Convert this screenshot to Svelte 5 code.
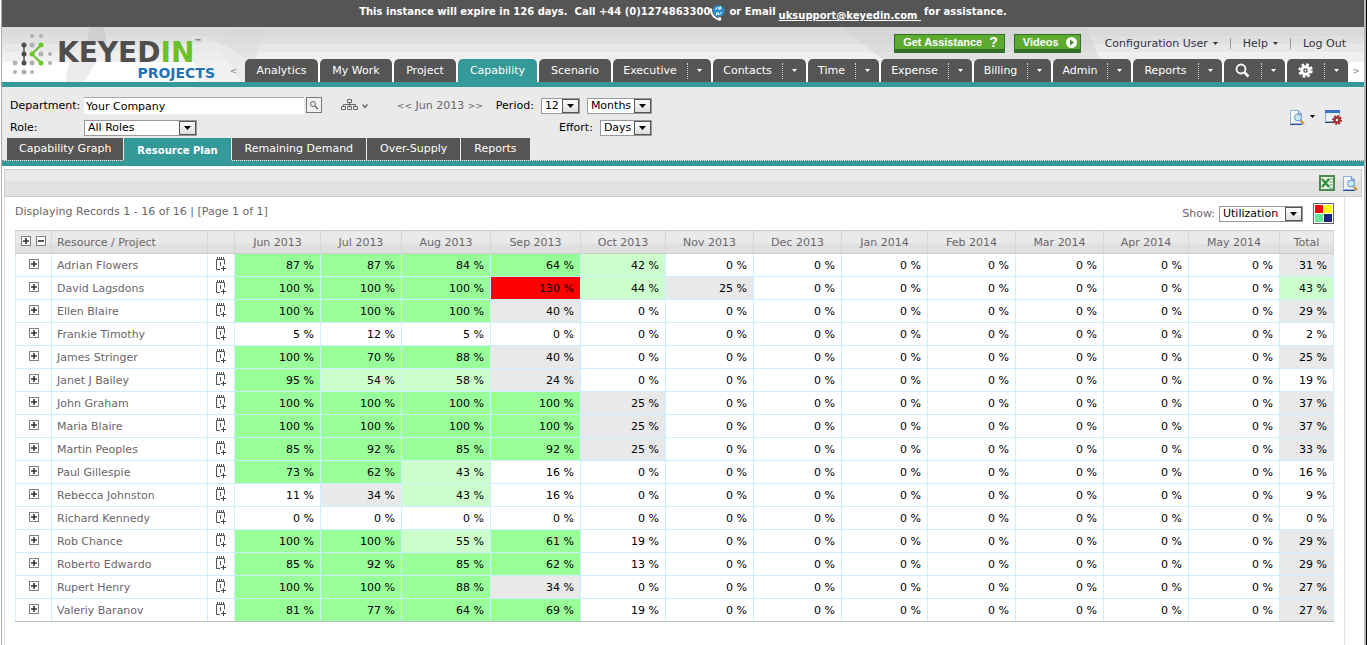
<script>
	const navTabs = [
		{ label: 'Analytics', size: 73 },
		{ label: 'My Work', size: 72 },
		{ label: 'Project', size: 62 },
		{ label: 'Capability', size: 79, active: true },
		{ label: 'Scenario', size: 72 },
		{ label: 'Executive', size: 98, menu: true },
		{ label: 'Contacts', size: 93, menu: true },
		{ label: 'Time', size: 71, menu: true },
		{ label: 'Expense', size: 91, menu: true },
		{ label: 'Billing', size: 77, menu: true },
		{ label: 'Admin', size: 78, menu: true },
		{ label: 'Reports', size: 89, menu: true },
		{ label: 'Search', size: 61, icon: 'search', menu: true },
		{ label: 'Settings', size: 61, icon: 'gear', menu: true }
	];

	const subTabs = ['Capability Graph', 'Resource Plan', 'Remaining Demand', 'Over-Supply', 'Reports'];

	const months = [
		{ label: 'Jun 2013', width: 86 },
		{ label: 'Jul 2013', width: 81 },
		{ label: 'Aug 2013', width: 89 },
		{ label: 'Sep 2013', width: 90 },
		{ label: 'Oct 2013', width: 85 },
		{ label: 'Nov 2013', width: 88 },
		{ label: 'Dec 2013', width: 88 },
		{ label: 'Jan 2014', width: 86 },
		{ label: 'Feb 2014', width: 88 },
		{ label: 'Mar 2014', width: 88 },
		{ label: 'Apr 2014', width: 85 },
		{ label: 'May 2014', width: 91 },
		{ label: 'Total', width: 54 }
	];

	// values run from the first month; the rest of the year is empty
	const resources = [
		{ name: 'Adrian Flowers', values: [87, 87, 84, 64, 42], total: 31 },
		{ name: 'David Lagsdons', values: [100, 100, 100, 130, 44, 25], total: 43 },
		{ name: 'Ellen Blaire', values: [100, 100, 100, 40], total: 29 },
		{ name: 'Frankie Timothy', values: [5, 12, 5], total: 2 },
		{ name: 'James Stringer', values: [100, 70, 88, 40], total: 25 },
		{ name: 'Janet J Bailey', values: [95, 54, 58, 24], total: 19 },
		{ name: 'John Graham', values: [100, 100, 100, 100, 25], total: 37 },
		{ name: 'Maria Blaire', values: [100, 100, 100, 100, 25], total: 37 },
		{ name: 'Martin Peoples', values: [85, 92, 85, 92, 25], total: 33 },
		{ name: 'Paul Gillespie', values: [73, 62, 43, 16], total: 16 },
		{ name: 'Rebecca Johnston', values: [11, 34, 43, 16], total: 9 },
		{ name: 'Richard Kennedy', values: [], total: 0 },
		{ name: 'Rob Chance', values: [100, 100, 55, 61, 19], total: 29 },
		{ name: 'Roberto Edwardo', values: [85, 92, 85, 62, 13], total: 29 },
		{ name: 'Rupert Henry', values: [100, 100, 88, 34], total: 27 },
		{ name: 'Valeriy Baranov', values: [81, 77, 64, 69, 19], total: 27 }
	];

	let activeSub = $state('Resource Plan');
	let department = $state('Your Company');

	function rowCells(r) {
		const cells = Array.from({ length: 12 }, (_, i) => r.values[i] ?? 0);
		return [...cells, r.total];
	}

	function level(v) {
		if (v > 100) return 'over';
		if (v > 60) return 'high';
		if (v > 40) return 'mid';
		if (v > 20) return 'low';
		return '';
	}
</script>

{#snippet caret()}
	<svg class="caret" width="5" height="3" viewBox="0 0 5 3" aria-hidden="true"><path d="M0 0h5L2.5 3z" fill="currentColor" /></svg>
{/snippet}

{#snippet box(minus)}
	<svg width="10" height="10" viewBox="0 0 10 10" aria-hidden="true">
		<rect x=".5" y=".5" width="9" height="9" fill="#fff" stroke="#7a857a" />
		<path d={minus ? 'M2 5h6' : 'M2 5h6M5 2v6'} stroke="#333" stroke-width="1.6" />
	</svg>
{/snippet}

{#snippet dropdown(id, options, size)}
	<span class="select {size}">
		<select {id}>
			{#each options as o}
				<option>{o}</option>
			{/each}
		</select>
		<span class="arrow"><svg width="7" height="4" viewBox="0 0 7 4"><path d="M0 0h7L3.5 4z" /></svg></span>
	</span>
{/snippet}

{#snippet preview()}
	<svg width="16" height="16" viewBox="0 0 16 16" aria-hidden="true">
		<path d="M1.500 1.500h8l3 3v10h-11z" fill="#f4f9ff" stroke="#8fb0dc" />
		<path d="M9.500 1.500v3h3" fill="#cfe0f5" stroke="#6f96cc" />
		<path d="M1 15.500h12" stroke="#2f4f86" />
		<circle cx="9" cy="8.500" r="3.500" fill="#c3e8fa" stroke="#6a93bd" />
		<path d="M11.500 11.500l3.500 3.500" stroke="#c9902c" stroke-width="2" />
	</svg>
{/snippet}

<div class="page">
	<div class="banner">
		<span>This instance will expire in 126 days.&nbsp; Call +44 (0)1274863300</span>
		<svg class="phone" width="16" height="17" viewBox="1 0 16 17" aria-hidden="true">
			<circle cx="9.500" cy="7" r="6" fill="#2a8fd0" />
			<path d="M6.500 6a3 3 0 0 1 5-1.500M12.500 8a3 3 0 0 1-5 1.500M11.500 2.500v2.500h-2.500M7.500 11.500v-2.500h2.500" fill="none" stroke="#fff" />
			<path d="M2 6c0 5 4 9 8.500 9.500" fill="none" stroke="#fff" stroke-width="2" />
			<path d="M1 6l2 0M9 15.500l3-1" stroke="#fff" stroke-width="3" />
		</svg>
		<span>or Email</span>
		<a href="mailto:uksupport@keyedin.com">uksupport@keyedin.com&nbsp;</a>
		<span>for assistance.</span>
	</div>

	<header>
		<svg class="backdrop left" width="400" height="55" viewBox="0 0 400 55" aria-hidden="true">
			<path d="M88 0h13l4 14h-20z" fill="#cfcfcf" />
			<path d="M64 55c0-18 8-30 20-37h20l-22 37z" fill="#ebebeb" />
			<path d="M240 55c10-8 14-26 18-37L262 0h-28l-22 16z" fill="#d8d8d8" opacity=".5" />
			<path d="M212 14c24 8 40 22 40 41H196c0-12-5-25-20-37z" fill="#ebebeb" opacity=".7" />
		</svg>
		<svg class="backdrop right" width="530" height="35" viewBox="0 0 530 35" aria-hidden="true">
			<path d="M8 0h244l15 35H52z" fill="#cecece" opacity=".45" />
		</svg>

		<div class="logo">
			<svg width="42" height="42" viewBox="0 0 42 42" aria-hidden="true">
				<g fill="#b0b0b0">
					<circle cx="19" cy="3" r="2" /><circle cx="28" cy="3" r="2" />
					<circle cx="19" cy="12" r="2.500" /><circle cx="28" cy="21" r="2.500" /><circle cx="37" cy="21" r="2" />
					<circle cx="2" cy="30" r="2.500" /><circle cx="19" cy="30" r="2.500" /><circle cx="37" cy="30" r="2" />
					<circle cx="2" cy="39" r="2" /><circle cx="11" cy="39" r="2.500" /><circle cx="19" cy="39" r="2" />
				</g>
				<path d="M11 12v18" stroke="#555" stroke-width="1.500" />
				<g fill="#4d4d4d"><circle cx="11" cy="12" r="2.500" /><circle cx="11" cy="21" r="2.500" /><circle cx="11" cy="30" r="2.500" /></g>
				<path d="M28 12l-9 9 9 9" fill="none" stroke="#6abf2b" stroke-width="2" />
				<g fill="#6cc82a"><circle cx="28" cy="12" r="2.500" /><circle cx="19" cy="21" r="2.500" /><circle cx="28" cy="30" r="2.500" /></g>
			</svg>
			<div class="wordmark">
				<div class="brand">KEYED<b>IN</b><sup>™</sup></div>
				<div class="product">PROJECTS</div>
			</div>
		</div>

		<button class="scroll" aria-label="Scroll tabs left">&lt;</button>

		<div class="right-side">
			<div class="links">
				<button class="green">Get Assistance <strong>?</strong></button>
				<button class="green">Videos
					<svg width="11" height="11" viewBox="0 0 11 11" aria-hidden="true"><circle cx="5.500" cy="5.500" r="5.500" fill="#fff" /><path d="M4 2.500v6l4-3z" fill="#3f8f2a" /></svg>
				</button>
				<a class="user" href="#user">Configuration User {@render caret()}</a>
				<a href="#help">Help {@render caret()}</a>
				<a href="#logout">Log Out</a>
			</div>
			<nav>
				{#each navTabs as tab}
					<div class="tab" class:active={tab.active} style="flex-grow: {tab.size}">
						<a href="#{tab.label}" aria-label={tab.label}>
							{#if tab.icon === 'search'}
								<svg width="15" height="15" viewBox="0 0 15 15"><circle cx="6" cy="6" r="4.500" fill="none" stroke="#fff" stroke-width="1.800" /><path d="M9.500 9.500l4 4" stroke="#fff" stroke-width="2.500" /></svg>
							{:else if tab.icon === 'gear'}
								<svg width="15" height="15" viewBox="0 0 15 15">
									<circle cx="7.500" cy="7.500" r="6" fill="none" stroke="#fff" stroke-width="2.500" stroke-dasharray="2.700 2" />
									<circle cx="7.500" cy="7.500" r="3.800" fill="none" stroke="#fff" stroke-width="3" />
									<circle cx="7.500" cy="7.500" r="1" fill="#fff" />
								</svg>
							{:else}
								{tab.label}
							{/if}
						</a>
						{#if tab.menu}
							<button aria-label="{tab.label} menu">{@render caret()}</button>
						{/if}
					</div>
				{/each}
			</nav>
		</div>
		<button class="scroll" aria-label="Scroll tabs right">&gt;</button>
	</header>

	<section class="filters">
		<div class="fields">
			<div class="names">
				<label for="department">Department:</label>
				<span class="lookup">
					<input id="department" type="text" bind:value={department} />
					<button aria-label="Find department">
						<svg width="10" height="10" viewBox="0 0 10 10"><circle cx="4" cy="4" r="2.500" fill="none" stroke="#666" /><path d="M6 6l3 3" stroke="#666" stroke-width="1.500" /></svg>
					</button>
				</span>
				<label for="role">Role:</label>
				{@render dropdown('role', ['All Roles'], 'wide')}
			</div>
			<button class="tree" aria-label="Organisation">
				<svg width="28" height="12" viewBox="0 0 28 12">
					<path d="M6.500 1.500h4v3h-4zM.5 8.500h4v3h-4zM6.500 8.500h4v3h-4zM12.500 8.500h4v3h-4zM8.500 4.500v4M2.500 8.500v-2h12v2" fill="none" stroke="#666" />
					<path d="M21.500 6.500l2.500 3 2.500-3" fill="none" stroke="#666" stroke-width="1.400" />
				</svg>
			</button>
			<div class="range">
				<div class="line">
					<span class="step"><a href="#prev" aria-label="Earlier">&lt;&lt;</a> Jun 2013 <a href="#next" aria-label="Later">&gt;&gt;</a></span>
					<label for="period">Period:</label>
					{@render dropdown('period', ['12'], 'tiny')}
					{@render dropdown('unit', ['Months'], 'medium')}
				</div>
				<div class="line">
					<label for="effort">Effort:</label>
					{@render dropdown('effort', ['Days'], 'small')}
				</div>
			</div>
			<div class="tools">
				<button aria-label="Preview">{@render preview()}</button>
				<button class="more" aria-label="Preview options">{@render caret()}</button>
				<button aria-label="Page settings">
					<svg width="17" height="16" viewBox="0 0 17 16">
						<path d="M.5 1.500h14v11H.5z" fill="#eef4fd" stroke="#8fa9d4" />
						<path d="M0 1h15v3H0z" fill="#3c6fc8" />
						<path d="M0 13.500h9" stroke="#345" />
						<circle cx="12" cy="11" r="4" fill="none" stroke="#a02a2a" stroke-width="2" stroke-dasharray="1.600 1.500" />
						<circle cx="12" cy="11" r="2.500" fill="none" stroke="#a83232" stroke-width="2.500" />
					</svg>
				</button>
			</div>
		</div>
		<div class="subtabs">
			{#each subTabs as t}
				<button class:active={t === activeSub} onclick={() => (activeSub = t)}>{t}</button>
			{/each}
		</div>
	</section>

	<main>
		<div class="toolbar">
			<button aria-label="Export to Excel">
				<svg width="16" height="16" viewBox="0 0 16 16">
					<path d="M1 1h14v14H1z" fill="#e9f3e6" stroke="#4d8a4f" stroke-width="2" />
					<path d="M10 4h4M10 7h4M10 10h4M10 13h4" stroke="#78a878" />
					<path d="M3 4l7 8M10 4l-7 8" stroke="#2c8b35" stroke-width="2.200" />
				</svg>
			</button>
			<button aria-label="Print preview">{@render preview()}</button>
		</div>

		<div class="content">
			<div class="summary">
				<span>Displaying Records 1 - 16 of 16 | [Page 1 of 1]</span>
				<span class="show">
					<label for="show">Show:</label>
					{@render dropdown('show', ['Utilization'], 'show-by')}
					<button class="palette" aria-label="Colour key">
						<i class="red"></i><i class="yellow"></i><i class="green-key"></i><i class="navy"></i>
					</button>
				</span>
			</div>

			<table>
				<colgroup>
					<col style="width: 36px" />
					<col style="width: 156px" />
					<col style="width: 27px" />
					{#each months as m}
						<col style="width: {m.width}px" />
					{/each}
				</colgroup>
				<thead>
					<tr>
						<th class="toggle">
							<button aria-label="Expand all">{@render box(false)}</button>
							<button aria-label="Collapse all">{@render box(true)}</button>
						</th>
						<th class="name">Resource / Project</th>
						<th></th>
						{#each months as m}
							<th>{m.label}</th>
						{/each}
					</tr>
				</thead>
				<tbody>
					{#each resources as r}
						<tr>
							<td class="toggle"><button aria-label="Expand {r.name}">{@render box(false)}</button></td>
							<td class="name">{r.name}</td>
							<td class="toggle">
								<button aria-label="Add booking for {r.name}">
									<svg width="13" height="15" viewBox="0 0 13 15">
										<path d="M5 12.500H1.500v-10h8v5" fill="none" stroke="#555" />
										<path d="M2.500 0v3M4.500 0v3M6.500 0v3M8.500 0v3M5.500 5v4" stroke="#555" />
										<path d="M6 11.500h5M8.500 9v5" stroke="#444" />
									</svg>
								</button>
							</td>
							{#each rowCells(r) as v}
								<td class={level(v)}>{v} %</td>
							{/each}
						</tr>
					{/each}
				</tbody>
			</table>
		</div>
	</main>
</div>

<style>
	:global(body) {
		margin: 0;
		background: #fff;
	}
	.page {
		display: flex;
		flex-direction: column;
		min-height: 100vh;
		box-sizing: border-box;
		margin: 0 1px;
		border-left: 1px solid #b0b0b0;
		border-right: 2px solid #b8b8b8;
		box-shadow: 1px 0 0 #000;
		font: 11px/16px 'DejaVu Sans', Verdana, sans-serif;
		color: #000;
	}
	button {
		font: inherit;
		padding: 0;
		border: 0;
		background: none;
		cursor: pointer;
	}
	svg {
		display: block;
	}
	a {
		color: inherit;
		text-decoration: none;
	}

	/* expiry notice */
	.banner {
		display: flex;
		justify-content: center;
		gap: 3px;
		height: 23px;
		padding-top: 4px;
		background: #555;
		color: #fff;
		font-size: 10px;
		font-weight: bold;
	}
	.banner a {
		padding-top: 4px;
		text-decoration: underline;
	}
	.phone {
		margin-left: -3px;
	}

	/* header */
	header {
		position: relative;
		display: flex;
		align-items: flex-end;
		height: 55px;
		background: linear-gradient(#dadada 9px, #e0e0e0 9px 17px, #e8e8e8 17px 25px, #f0f0f0 25px 35px, #fff 35px);
		border-bottom: 5px solid #339999;
	}
	.backdrop {
		position: absolute;
		top: 0;
	}
	.backdrop.left {
		left: 0;
	}
	.backdrop.right {
		right: 0;
	}
	.logo {
		position: relative;
		display: flex;
		align-self: flex-start;
		flex: 0 0 220px;
		box-sizing: border-box;
		padding: 6px 0 0 11px;
		gap: 2px;
	}
	.wordmark {
		width: 158px;
		padding-top: 6px;
	}
	.brand {
		color: #4f4f4f;
		font-size: 28px;
		line-height: 28px;
		font-weight: bold;
		white-space: nowrap;
	}
	.brand b {
		color: #6cc02c;
	}
	.brand sup {
		font-size: 8px;
		line-height: 8px;
		vertical-align: top;
		font-weight: normal;
	}
	.product {
		color: #2272b4;
		font-size: 14px;
		line-height: 12px;
		font-weight: bold;
		text-align: right;
	}
	.scroll {
		position: relative;
		flex: 0 0 16px;
		height: 22px;
		color: #888;
		font-size: 9px;
	}
	.scroll:first-of-type {
		flex-basis: 23px;
	}
	.right-side {
		position: relative;
		flex: 1;
		display: flex;
		flex-direction: column;
		justify-content: space-between;
		height: 100%;
	}
	.links {
		display: flex;
		justify-content: flex-end;
		align-items: center;
		padding: 7px 2px 0 0;
		color: #333344;
	}
	.links a {
		display: flex;
		align-items: center;
		gap: 5px;
		padding: 0 0 0 12px;
		margin-left: 12px;
		border-left: 1px solid #999;
		line-height: 11px;
	}
	.links a.user {
		border: 0;
	}
	.green {
		display: flex;
		align-items: center;
		gap: 7px;
		height: 19px;
		margin-right: 9px;
		padding: 0 6px 0 8px;
		border: 1px solid #33702c;
		border-bottom-width: 4px;
		background: #5cab2f;
		color: #fff;
		font-family: 'Liberation Sans', Arial, sans-serif;
		font-weight: bold;
	}
	.green strong {
		font-size: 14px;
	}
	.green + .green {
		margin-right: 0;
		padding-right: 3px;
	}
	nav {
		display: flex;
		gap: 2px;
	}
	.tab {
		flex: 1 0 0;
		display: flex;
		align-items: center;
		height: 23px;
		background: #555;
		border-radius: 5px 5px 0 0;
		color: #fff;
		white-space: nowrap;
	}
	.tab.active {
		background: #339999;
	}
	.tab a {
		flex: 1;
		display: flex;
		justify-content: center;
	}
	.tab button {
		display: flex;
		align-items: center;
		justify-content: center;
		width: 24px;
		height: 16px;
		border-left: 1px dotted #ccc;
		color: #fff;
	}

	/* filters */
	.filters {
		background: #eaeaea;
		border-bottom: 5px solid #339999;
	}
	.fields {
		display: flex;
		padding: 8px 22px 0 8px;
	}
	.names {
		display: grid;
		grid-template-columns: 74px 238px;
		grid-auto-rows: 21px;
		row-gap: 1px;
		align-items: center;
	}
	.lookup {
		display: flex;
		gap: 2px;
	}
	.lookup input {
		flex: 1;
		min-width: 0;
		height: 17px;
		box-sizing: border-box;
		padding: 0 2px;
		border: 0;
		border-top: 1px solid #aaa;
		background: #fff;
		font: inherit;
	}
	.lookup button {
		display: grid;
		place-items: center;
		width: 16px;
		height: 16px;
		border: 1px solid #777;
		background: #f0f0f0;
	}
	.select {
		display: inline-grid;
		grid-template-columns: 1fr 17px;
		align-items: center;
		height: 16px;
		box-sizing: border-box;
		border: 1px solid #999;
		background: #fff;
	}
	.select select {
		grid-area: 1 / 1 / 2 / 3;
		width: 100%;
		height: 14px;
		padding: 0 0 0 3px;
		border: 0;
		appearance: none;
		background: none;
		color: #000;
		font: inherit;
		line-height: 14px;
	}
	.arrow {
		grid-area: 1 / 2;
		display: grid;
		place-items: center;
		height: 12px;
		border: 1px solid #555;
		background: linear-gradient(#fff, #ddd);
		pointer-events: none;
	}
	.wide {
		width: 113px;
	}
	.tiny {
		width: 39px;
	}
	.small {
		width: 52px;
	}
	.medium {
		width: 65px;
	}
	.show-by {
		width: 84px;
	}
	.tree {
		align-self: flex-start;
		padding: 3px 0 0 19px;
	}
	.range {
		display: grid;
		row-gap: 1px;
	}
	.range .line {
		display: flex;
		justify-content: flex-end;
		align-items: center;
		gap: 7px;
		height: 21px;
	}
	.step {
		margin: 0 6px 0 28px;
		color: #6b656b;
	}
	.step a {
		font-size: 9px;
	}
	.tools {
		display: flex;
		align-items: center;
		gap: 5px;
		margin-left: auto;
	}
	.tools .more {
		padding-right: 5px;
	}
	.subtabs {
		display: flex;
		gap: 1px;
		padding-left: 5px;
		border-bottom: 1px dotted #888;
	}
	.subtabs button {
		height: 22px;
		padding: 0 12px;
		background: #555;
		color: #fff;
	}
	.subtabs .active {
		height: 23px;
		margin-bottom: -1px;
		padding: 2px 13px 0;
		background: #339999;
		font-size: 10px;
		font-weight: bold;
	}
	.subtabs .active ~ button {
		padding: 0 13px;
	}

	/* records */
	main {
		flex: 1;
		display: flex;
		flex-direction: column;
		padding: 3px 2px 0;
	}
	.toolbar {
		display: flex;
		justify-content: flex-end;
		align-items: center;
		gap: 7px;
		height: 26px;
		padding-right: 3px;
		border: 1px solid #ccc;
		background: linear-gradient(#eaeaea 11px, #e2e2e2 11px);
	}
	.content {
		flex: 1;
		margin-right: 17px;
		padding: 0 10px;
		border: solid #e2e2e2;
		border-width: 0 1px;
		color: #6b656b;
	}
	.summary {
		display: flex;
		justify-content: space-between;
		height: 33px;
	}
	.summary > span:first-child {
		padding-top: 7px;
	}
	.show {
		display: flex;
		align-items: center;
		gap: 4px;
	}
	.palette {
		display: grid;
		grid-template-columns: 8px 8px;
		grid-auto-rows: 8px;
		gap: 1px;
		margin-left: 6px;
		padding: 1px;
		border: 1px solid #666;
	}
	.red {
		background: #f00;
	}
	.yellow {
		background: #ff0;
	}
	.green-key {
		background: #66e699;
	}
	.navy {
		background: #1a237e;
	}
	table {
		width: 100%;
		table-layout: fixed;
		border-collapse: collapse;
		border-bottom: 1px solid #bbb;
	}
	th,
	td {
		box-sizing: border-box;
		height: 23px;
		padding: 1px 6px 0 0;
		border: 1px solid #cceeff;
		line-height: 14px;
		white-space: nowrap;
	}
	th {
		padding: 1px 0 0;
		border-color: #ccc;
		border-right-color: #d6d6d6;
		border-left-color: #d6d6d6;
		background: linear-gradient(#eaeaea 12px, #e0e0e0 12px);
		font-weight: normal;
	}
	td {
		color: #000;
		text-align: right;
	}
	tbody tr:last-child td {
		border-bottom-color: #bbb;
	}
	.name {
		padding-left: 5px;
		color: #6b656b;
		text-align: left;
	}
	.toggle {
		padding: 0 0 2px;
		text-align: center;
		font-size: 0;
	}
	.toggle button {
		vertical-align: middle;
	}
	th.toggle button + button {
		margin-left: 5px;
	}
	.over {
		background: #f00;
	}
	.high {
		background: #99ff99;
	}
	.mid {
		background: #ccffcc;
	}
	.low {
		background: #e9e9e9;
	}
</style>
